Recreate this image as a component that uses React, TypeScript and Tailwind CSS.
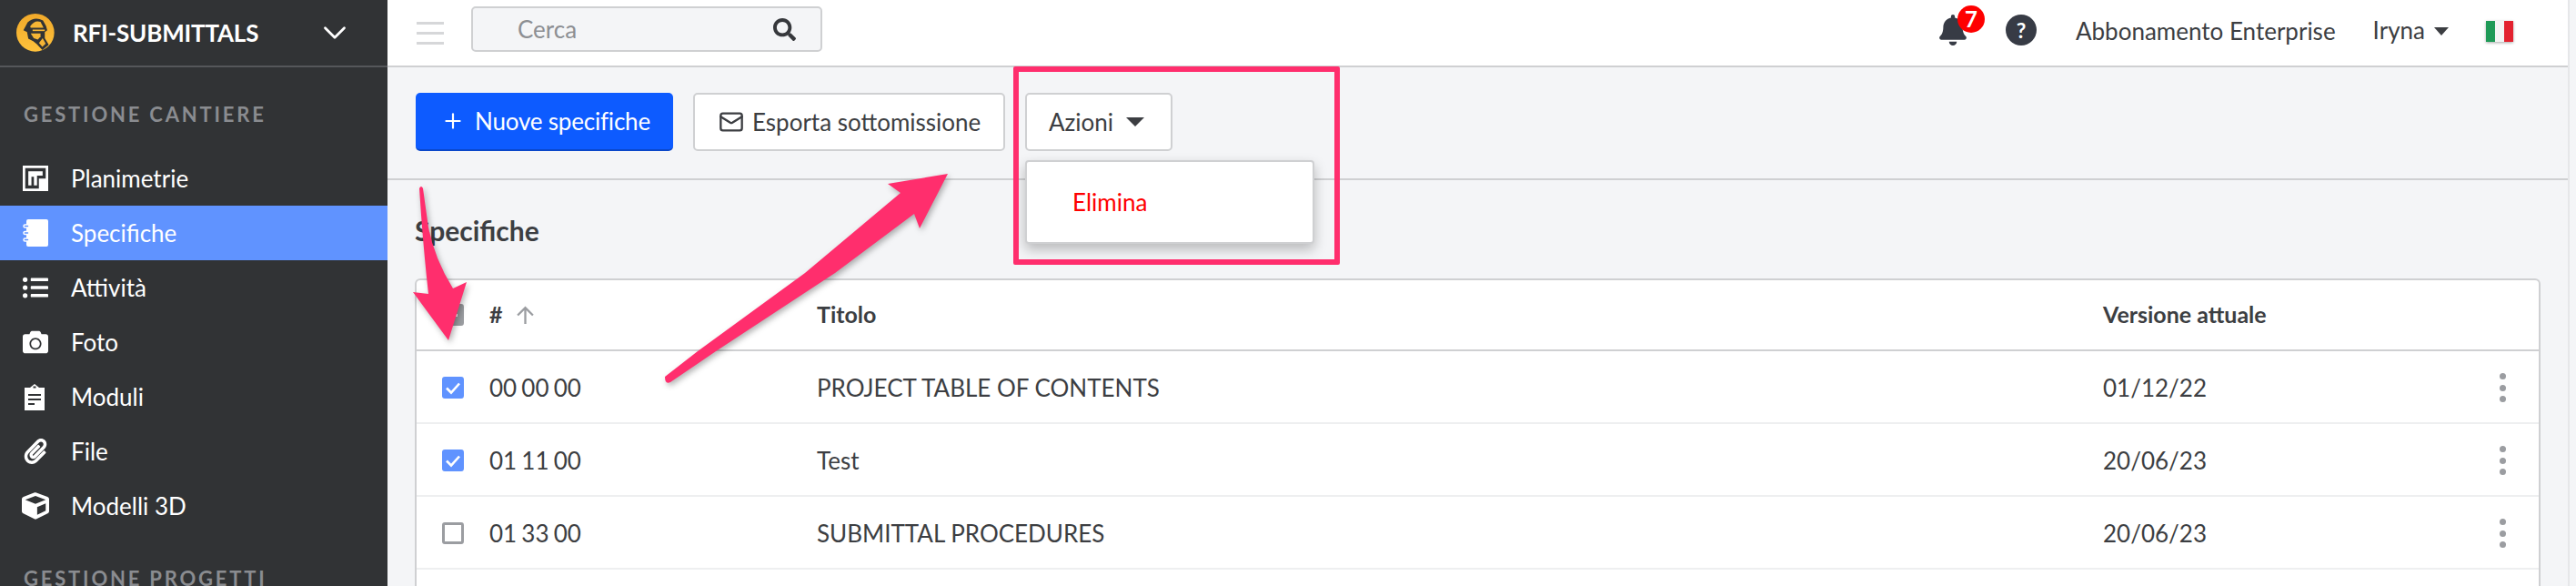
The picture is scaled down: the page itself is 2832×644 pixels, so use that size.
import { ChevronDown, Mail, Plus } from 'lucide-react';
import { FaBell, FaCamera, FaCube, FaListUl, FaPaperclip, FaSearch } from 'react-icons/fa';

function Logo() {
  return (
    <svg viewBox="25 20 125 125" className="w-[42px] h-[42px]">
      <defs>
        <linearGradient id="logoGrad" x1="0" y1="0" x2="0" y2="1">
          <stop offset="0" stopColor="#f0a92a" />
          <stop offset="1" stopColor="#ffc23c" />
        </linearGradient>
      </defs>
      <circle cx="87" cy="82" r="62" fill="url(#logoGrad)" />
      <path
        d="M48 74 L62 48 Q85 28 112 42 L122 60 L126 74 L118 80 L118 100 L131 122 L110 139 L92 120 L80 110 L64 102 L60 80z"
        fill="#313335"
      />
      <path d="M70 62 Q84 40 104 47 L114 66 H72z" fill="#f5b535" />
      <rect x="78" y="72" width="40" height="5" fill="#f5b535" />
      <path d="M72 85 H104 V95 L95 105 L82 100z" fill="#f5b535" />
      <path d="M99 116 L111 100 L121 118 L110 129z" fill="#f5b535" />
    </svg>
  );
}

function PlanIcon() {
  return (
    <svg viewBox="0 0 82 82" className="w-[28px] h-[28px]">
      <rect width="82" height="82" fill="#fff" />
      <path d="M8 8H74V42H52V74H8z" fill="#313335" />
      <path d="M18 18H64V32H46V64H36V36H28V64H18z" fill="#fff" />
    </svg>
  );
}

function NotebookIcon() {
  return (
    <svg viewBox="0 0 28 30" className="w-[28px] h-[30px]">
      <path d="M4 2a2 2 0 0 1 2-2h20a2 2 0 0 1 2 2v26a2 2 0 0 1-2 2H6a2 2 0 0 1-2-2z" fill="#fff" />
      <g fill="#6093ff" stroke="#fff" strokeWidth="1.5">
        <rect x="1" y="6" width="6" height="3" rx="1.5" />
        <rect x="1" y="13.5" width="6" height="3" rx="1.5" />
        <rect x="1" y="21" width="6" height="3" rx="1.5" />
      </g>
    </svg>
  );
}

function ClipboardIcon() {
  return (
    <svg viewBox="0 0 22 29" className="w-[22px] h-[29px] ml-[2px]">
      <path d="M0 4h6l5-4 5 4h6v29H0z" fill="#fff" />
      <rect x="9.5" y="2.5" width="3" height="2" fill="#313335" />
      <rect x="4" y="11" width="14" height="2" fill="#313335" />
      <rect x="4" y="16" width="14" height="2" fill="#313335" />
      <rect x="4" y="21" width="7" height="2" fill="#313335" />
    </svg>
  );
}

const navItems = [
  { label: 'Planimetrie', icon: <PlanIcon /> },
  { label: 'Specifiche', icon: <NotebookIcon />, active: true },
  { label: 'Attività', icon: <FaListUl className="w-[28px] h-[28px]" /> },
  { label: 'Foto', icon: <FaCamera className="w-[28px] h-[28px]" /> },
  { label: 'Moduli', icon: <ClipboardIcon /> },
  { label: 'File', icon: <FaPaperclip className="w-[28px] h-[28px]" /> },
  { label: 'Modelli 3D', icon: <FaCube className="w-[30px] h-[30px] -ml-[1px]" /> },
];

const rows = [
  { code: '00 00 00', title: 'PROJECT TABLE OF CONTENTS', date: '01/12/22', checked: true },
  { code: '01 11 00', title: 'Test', date: '20/06/23', checked: true },
  { code: '01 33 00', title: 'SUBMITTAL PROCEDURES', date: '20/06/23', checked: false },
];

function Checkbox({ checked }: { checked: boolean }) {
  if (!checked) {
    return <div className="w-6 h-6 rounded-[3px] border-[3px] border-[#9b9da1] bg-white" />;
  }
  return (
    <div className="w-6 h-6 rounded-[3px] bg-[#6093ff] flex items-center justify-center">
      <svg viewBox="0 0 24 24" className="w-6 h-6">
        <path d="M5 12.5l5 5 9-10" fill="none" stroke="#fff" strokeWidth="2.6" />
      </svg>
    </div>
  );
}

function Kebab() {
  return (
    <div className="flex flex-col gap-[5.5px] items-center">
      <span className="w-[7px] h-[7px] rounded-full bg-[#9b9da1]" />
      <span className="w-[7px] h-[7px] rounded-full bg-[#9b9da1]" />
      <span className="w-[7px] h-[7px] rounded-full bg-[#9b9da1]" />
    </div>
  );
}

function Sidebar() {
  return (
    <aside className="w-[426px] shrink-0 bg-[#313335] text-white">
      <div className="h-[74px] flex items-center pl-[18px] pr-[43px] border-b-2 border-[#55575a]">
        <Logo />
        <span className="ml-[20px] text-[26px] font-bold tracking-[-0.2px]">RFI-SUBMITTALS</span>
        <ChevronDown className="ml-auto w-[42px] h-[42px] -mr-[6px]" strokeWidth={1.6} />
      </div>
      <div className="pl-[26px] mt-[37px] h-[30px] leading-[30px] text-[22px] font-bold tracking-[2.8px] text-[#8a8c90]">
        GESTIONE CANTIERE
      </div>
      <nav className="mt-[25px]">
        {navItems.map((item) => (
          <div
            key={item.label}
            className={`h-[60px] flex items-center text-[26px] ${item.active ? 'bg-[#6093ff]' : ''}`}
          >
            <div className="w-[78px] shrink-0 pl-[25px] flex">{item.icon}</div>
            <span>{item.label}</span>
          </div>
        ))}
      </nav>
      <div className="pl-[26px] mt-[35px] h-[30px] leading-[30px] text-[22px] font-bold tracking-[2.8px] text-[#8a8c90]">
        GESTIONE PROGETTI
      </div>
    </aside>
  );
}

function TopBar() {
  return (
    <header className="h-[74px] bg-white border-b-2 border-[#cfd0d2] flex items-center pl-[32px] pr-[60px] text-[#3c3e42]">
      <div className="w-[30px] flex flex-col gap-[8px]">
        <span className="h-[3px] bg-[#d6d7d9]" />
        <span className="h-[3px] bg-[#d6d7d9]" />
        <span className="h-[3px] bg-[#d6d7d9]" />
      </div>
      <div className="ml-[30px] w-[386px] h-[50px] mb-[8px] rounded-[5px] border-2 border-[#cfd0d2] bg-[#f4f5f7] flex items-center pl-[49px] pr-[27px]">
        <span className="text-[26px] text-[#8d8f93]">Cerca</span>
        <FaSearch className="ml-auto w-[25px] h-[25px] text-[#36383c]" />
      </div>
      <div className="ml-auto relative mb-[6px]">
        <FaBell className="w-[30px] h-[34px] text-[#373b45]" />
        <span className="absolute -top-[10px] left-[20px] w-[30px] h-[30px] rounded-full bg-[#fe0000] text-white text-[24px] font-bold leading-[30px] text-center">
          7
        </span>
      </div>
      <span className="ml-[43px] mb-[6px] w-[34px] h-[34px] rounded-full bg-[#373b45] text-white text-[23px] font-bold leading-[34px] text-center">
        ?
      </span>
      <span className="ml-[43px] mb-[4px] text-[26px]">Abbonamento Enterprise</span>
      <span className="ml-[41px] text-[26px] mb-[6px]">Iryna</span>
      <span className="ml-[10px] mb-[4px] w-0 h-0 border-x-[8px] border-x-transparent border-t-[9px] border-t-[#3c3e42]" />
      <div className="ml-[41px] mb-[3px] w-[30px] h-[23px] flex blur-[0.6px] shadow-[0_1px_3px_rgba(0,0,0,0.35)]">
        <span className="flex-1 bg-[#1f9a57]" />
        <span className="flex-1 bg-[#f4f4f4]" />
        <span className="flex-1 bg-[#e3222f]" />
      </div>
    </header>
  );
}

function Toolbar() {
  return (
    <div className="h-[124px] border-b-2 border-[#cfd0d2] pl-[31px] pt-[28px] flex gap-[22px] items-start text-[26px] text-[#3c3e42]">
      <button className="h-[64px] w-[283px] rounded-[5px] bg-[#0d5bff] border-b-2 border-[#0a47c9] text-white flex items-center pl-[28px]">
        <Plus className="w-[26px] h-[26px]" strokeWidth={2} />
        <span className="ml-[11px] tracking-[-0.2px]">Nuove specifiche</span>
      </button>
      <button className="h-[64px] w-[343px] rounded-[5px] bg-white border-2 border-[#cfd0d2] flex items-center pl-[26px]">
        <Mail className="w-[28px] h-[28px]" strokeWidth={2} />
        <span className="ml-[9px]">Esporta sottomissione</span>
      </button>
      <div className="relative">
        <button className="h-[64px] w-[162px] rounded-[5px] bg-white border-2 border-[#cfd0d2] flex items-center pl-[24px]">
          <span>Azioni</span>
          <span className="ml-[14px] w-0 h-0 border-x-[10px] border-x-transparent border-t-[10px] border-t-[#3c3e42]" />
        </button>
        <div className="absolute left-0 top-[74px] w-[318px] h-[92px] rounded-[4px] bg-white border-2 border-[#cfd0d2] shadow-[0_6px_14px_rgba(0,0,0,0.25)] flex items-center pl-[50px] text-[#fe0000]">
          Elimina
        </div>
      </div>
    </div>
  );
}

function SpecTable() {
  return (
    <div className="ml-[30px] mr-[30px] bg-white border-x-2 border-t-2 border-[#cfd0d2] rounded-t-[6px] text-[26px] text-[#3c3e42]">
      <div className="h-[78px] grid grid-cols-[80px_360px_1414px_1fr_80px] items-center border-b-2 border-[#cfd0d2] font-bold text-[25px]">
        <div className="pl-[28px]">
          <div className="w-6 h-6 rounded-[3px] bg-[#9b9da1] flex items-center justify-center">
            <span className="w-[10px] h-[3px] bg-white" />
          </div>
        </div>
        <div className="flex items-center gap-[14px]">
          #
          <svg viewBox="0 0 20 20" className="w-[21px] h-[21px]">
            <path d="M10 19V2M2 10l8-8 8 8" fill="none" stroke="#9b9da1" strokeWidth="2.2" />
          </svg>
        </div>
        <div>Titolo</div>
        <div>Versione attuale</div>
        <div />
      </div>
      {rows.map((row) => (
        <div
          key={row.code}
          className="h-[80px] pt-[2px] grid grid-cols-[80px_360px_1414px_1fr_80px] items-center border-b-2 border-[#eeeff0]"
        >
          <div className="pl-[28px]">
            <Checkbox checked={row.checked} />
          </div>
          <div className="[word-spacing:-1.5px]">{row.code}</div>
          <div>{row.title}</div>
          <div>{row.date}</div>
          <div className="flex justify-center">
            <Kebab />
          </div>
        </div>
      ))}
      <div className="h-[40px]" />
    </div>
  );
}

// annotation layer drawn on top of the screenshot
function Annotations() {
  return (
    <>
      <div className="absolute left-[1114px] top-[73px] w-[359px] h-[218px] border-[6px] border-[#ff2e6d] rounded-[2px]" />
      <svg
        viewBox="0 0 2832 644"
        className="absolute inset-0 w-[2832px] h-[644px] pointer-events-none drop-shadow-[2px_3px_3px_rgba(0,0,0,0.3)]"
      >
        <path
          d="M461 207 Q463 203 465 207 L471 250 Q478 285 498 317 L513 310 L493 374 L454 321 L471 323 Q465 270 461 207z"
          fill="#ff2e6d"
        />
        <path
          d="M731 414 L767 386 L885 300 L990 212 L976 202 L1042 191 L1011 251 L1005 235 L918 300 L787 386 L737 420 Q731 423 731 414z"
          fill="#ff2e6d"
        />
      </svg>
    </>
  );
}

export default function App() {
  return (
    <div className="relative w-[2832px] h-[644px] overflow-hidden flex bg-[#f4f5f7] font-['Lato',sans-serif]">
      <Sidebar />
      <main className="flex-1 min-w-0">
        <TopBar />
        <Toolbar />
        <h1 className="h-[108px] pt-[2px] pl-[30px] flex items-center text-[30px] font-bold text-[#3c3e42]">
          Specifiche
        </h1>
        <SpecTable />
      </main>
      <div className="w-[9px] shrink-0 border-l-2 border-[#e6e7e9]" />
      <Annotations />
    </div>
  );
}
